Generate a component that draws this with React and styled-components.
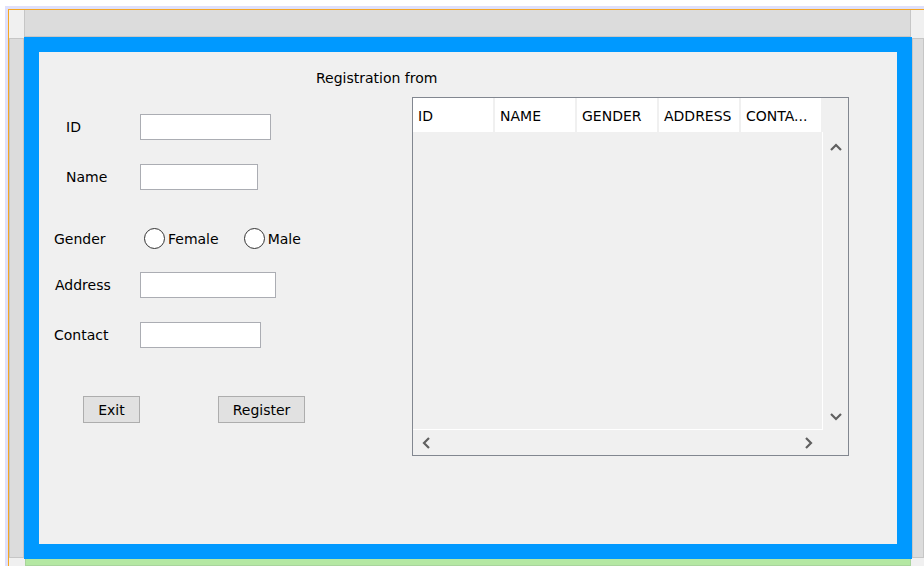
import styled, { createGlobalStyle } from "styled-components";

const GlobalStyle = createGlobalStyle`
  html, body {
    margin: 0;
    padding: 0;
    background: #ffffff;
    overflow: hidden;
  }
  body {
    font-family: "DejaVu Sans", Tahoma, sans-serif;
    font-size: 14px;
    color: #000000;
  }
`;

const Screen = styled.div`
  width: 924px;
  height: 566px;
  box-sizing: border-box;
  padding: 6px 0 0 5px;
  overflow: hidden;
`;

const Workspace = styled.div`
  height: 100%;
  box-sizing: border-box;
  border-top: 3px solid #dfe0fb;
  border-left: 3px solid #dfe0fb;
`;

const Designer = styled.div`
  height: 100%;
  box-sizing: border-box;
  border-top: 1px solid #f5a623;
  border-left: 1px solid #f5a623;
  background: #f0f0f0;
  display: grid;
  grid-template-columns: 15px 888px 1fr;
  grid-template-rows: 27px 522px 1fr;
`;

const Corner = styled.div``;

const Ruler = styled.div`
  box-sizing: border-box;
  background: ${({ $green }) => ($green ? "#b4e8a3" : "#dcdcdc")};
  border: 1px solid ${({ $green }) => ($green ? "#a9d49c" : "#c6c6c6")};
  border-top: ${({ $side }) => ($side ? "1px solid #c6c6c6" : "none")};
  margin: ${({ $m }) => $m};
`;

const Frame = styled.div`
  box-sizing: border-box;
  border: 15px solid #0099ff;
  background: #f0f0f0;
  display: flex;
  flex-direction: column;
`;

const Title = styled.div`
  margin: 18px 0 10px 277px;
  height: 17px;
  line-height: 17px;
`;

const Body = styled.div`
  display: flex;
  align-items: flex-start;
`;

const Form = styled.div`
  width: 373px;
  display: flex;
  flex-direction: column;
`;

const Row = styled.div`
  display: flex;
  align-items: center;
  height: ${({ $h }) => $h || 26}px;
  margin-top: ${({ $top }) => $top}px;
`;

const Label = styled.span`
  box-sizing: border-box;
  width: ${({ $w }) => $w || 101}px;
  padding-left: ${({ $indent }) => $indent}px;
  white-space: nowrap;
`;

const TextInput = styled.input`
  box-sizing: border-box;
  width: ${({ $w }) => $w}px;
  height: 26px;
  margin: 0;
  padding: 0 3px;
  border: 1px solid #abadb3;
  background: #ffffff;
  font: inherit;
  outline: none;
`;

const RadioOption = styled.label`
  display: flex;
  align-items: center;
  gap: 3px;
  margin-right: ${({ $after }) => $after || 0}px;
`;

const RadioCircle = styled.span`
  width: 21px;
  height: 21px;
  box-sizing: border-box;
  border: 1.5px solid #333333;
  border-radius: 50%;
  background: #ffffff;
`;

const ActionButton = styled.button`
  box-sizing: border-box;
  width: ${({ $w }) => $w}px;
  height: 27px;
  margin: 0 0 0 ${({ $left }) => $left}px;
  padding: 0;
  background: #e1e1e1;
  border: 1px solid #adadad;
  color: #000000;
  font: inherit;
`;

const Table = styled.div`
  box-sizing: border-box;
  width: 437px;
  height: 359px;
  border: 1px solid #828790;
  display: grid;
  grid-template-columns: 410px 1fr;
  grid-template-rows: 1fr 25px;
`;

const Viewport = styled.div`
  display: flex;
  flex-direction: column;
`;

const Header = styled.div`
  display: flex;
  gap: 2px;
  height: 34px;
`;

const HeaderCell = styled.div`
  box-sizing: border-box;
  width: 80px;
  padding: 3px 0 0 5px;
  line-height: 30px;
  background: #ffffff;
  white-space: nowrap;
  overflow: hidden;
`;

const Rows = styled.div`
  flex: 1;
  border-right: 1px solid #ffffff;
  border-bottom: 1px solid #ffffff;
`;

const VScroll = styled.div`
  display: flex;
  flex-direction: column;
  justify-content: space-between;
  padding-top: 34px;
`;

const HScroll = styled.div`
  display: flex;
  justify-content: space-between;
`;

const ScrollButton = styled.div`
  display: flex;
  align-items: center;
  justify-content: center;
  width: ${({ $w }) => $w}px;
  height: ${({ $h }) => $h}px;
`;

const Chevron = ({ dir }) => {
  const vertical = dir === "up" || dir === "down";
  const points = {
    up: "1,7 6,2 11,7",
    down: "1,1 6,6 11,1",
    left: "7,1 2,6 7,11",
    right: "1,1 6,6 1,11",
  }[dir];
  return (
    <svg width={vertical ? 12 : 8} height={vertical ? 8 : 12}>
      <polyline points={points} fill="none" stroke="#606060" strokeWidth="2.2" />
    </svg>
  );
};

const columns = ["ID", "NAME", "GENDER", "ADDRESS", "CONTA..."];

export default function App() {
  return (
    <>
      <GlobalStyle />
      <Screen>
        <Workspace>
          <Designer>
            <Corner />
            <Ruler $m="0 1px 0 0" />
            <Corner />

            <Ruler $side $m="1px 0 1px 0" />
            <Frame>
              <Title>Registration from</Title>
              <Body>
                <Form>
                  <Row $top={17}>
                    <Label $indent={27}>ID</Label>
                    <TextInput $w={131} />
                  </Row>
                  <Row $top={24}>
                    <Label $indent={27}>Name</Label>
                    <TextInput $w={118} />
                  </Row>
                  <Row $top={38} $h={21}>
                    <Label $w={105} $indent={15}>Gender</Label>
                    <RadioOption $after={25}>
                      <RadioCircle />
                      Female
                    </RadioOption>
                    <RadioOption>
                      <RadioCircle />
                      Male
                    </RadioOption>
                  </Row>
                  <Row $top={23}>
                    <Label $indent={16}>Address</Label>
                    <TextInput $w={136} />
                  </Row>
                  <Row $top={24}>
                    <Label $indent={15}>Contact</Label>
                    <TextInput $w={121} />
                  </Row>
                  <Row $top={48} $h={27}>
                    <ActionButton $w={57} $left={44}>Exit</ActionButton>
                    <ActionButton $w={87} $left={78}>Register</ActionButton>
                  </Row>
                </Form>
                <Table>
                  <Viewport>
                    <Header>
                      {columns.map((c) => (
                        <HeaderCell key={c}>{c}</HeaderCell>
                      ))}
                    </Header>
                    <Rows />
                  </Viewport>
                  <VScroll>
                    <ScrollButton $w={25} $h={30}>
                      <Chevron dir="up" />
                    </ScrollButton>
                    <ScrollButton $w={25} $h={26}>
                      <Chevron dir="down" />
                    </ScrollButton>
                  </VScroll>
                  <HScroll>
                    <ScrollButton $w={26} $h={25}>
                      <Chevron dir="left" />
                    </ScrollButton>
                    <ScrollButton $w={28} $h={25}>
                      <Chevron dir="right" />
                    </ScrollButton>
                  </HScroll>
                  <Corner />
                </Table>
              </Body>
            </Frame>
            <Ruler $side $m="1px 0 1px 0" />

            <Corner />
            <Ruler $green $m="0 1px" />
            <Corner />
          </Designer>
        </Workspace>
      </Screen>
    </>
  );
}
